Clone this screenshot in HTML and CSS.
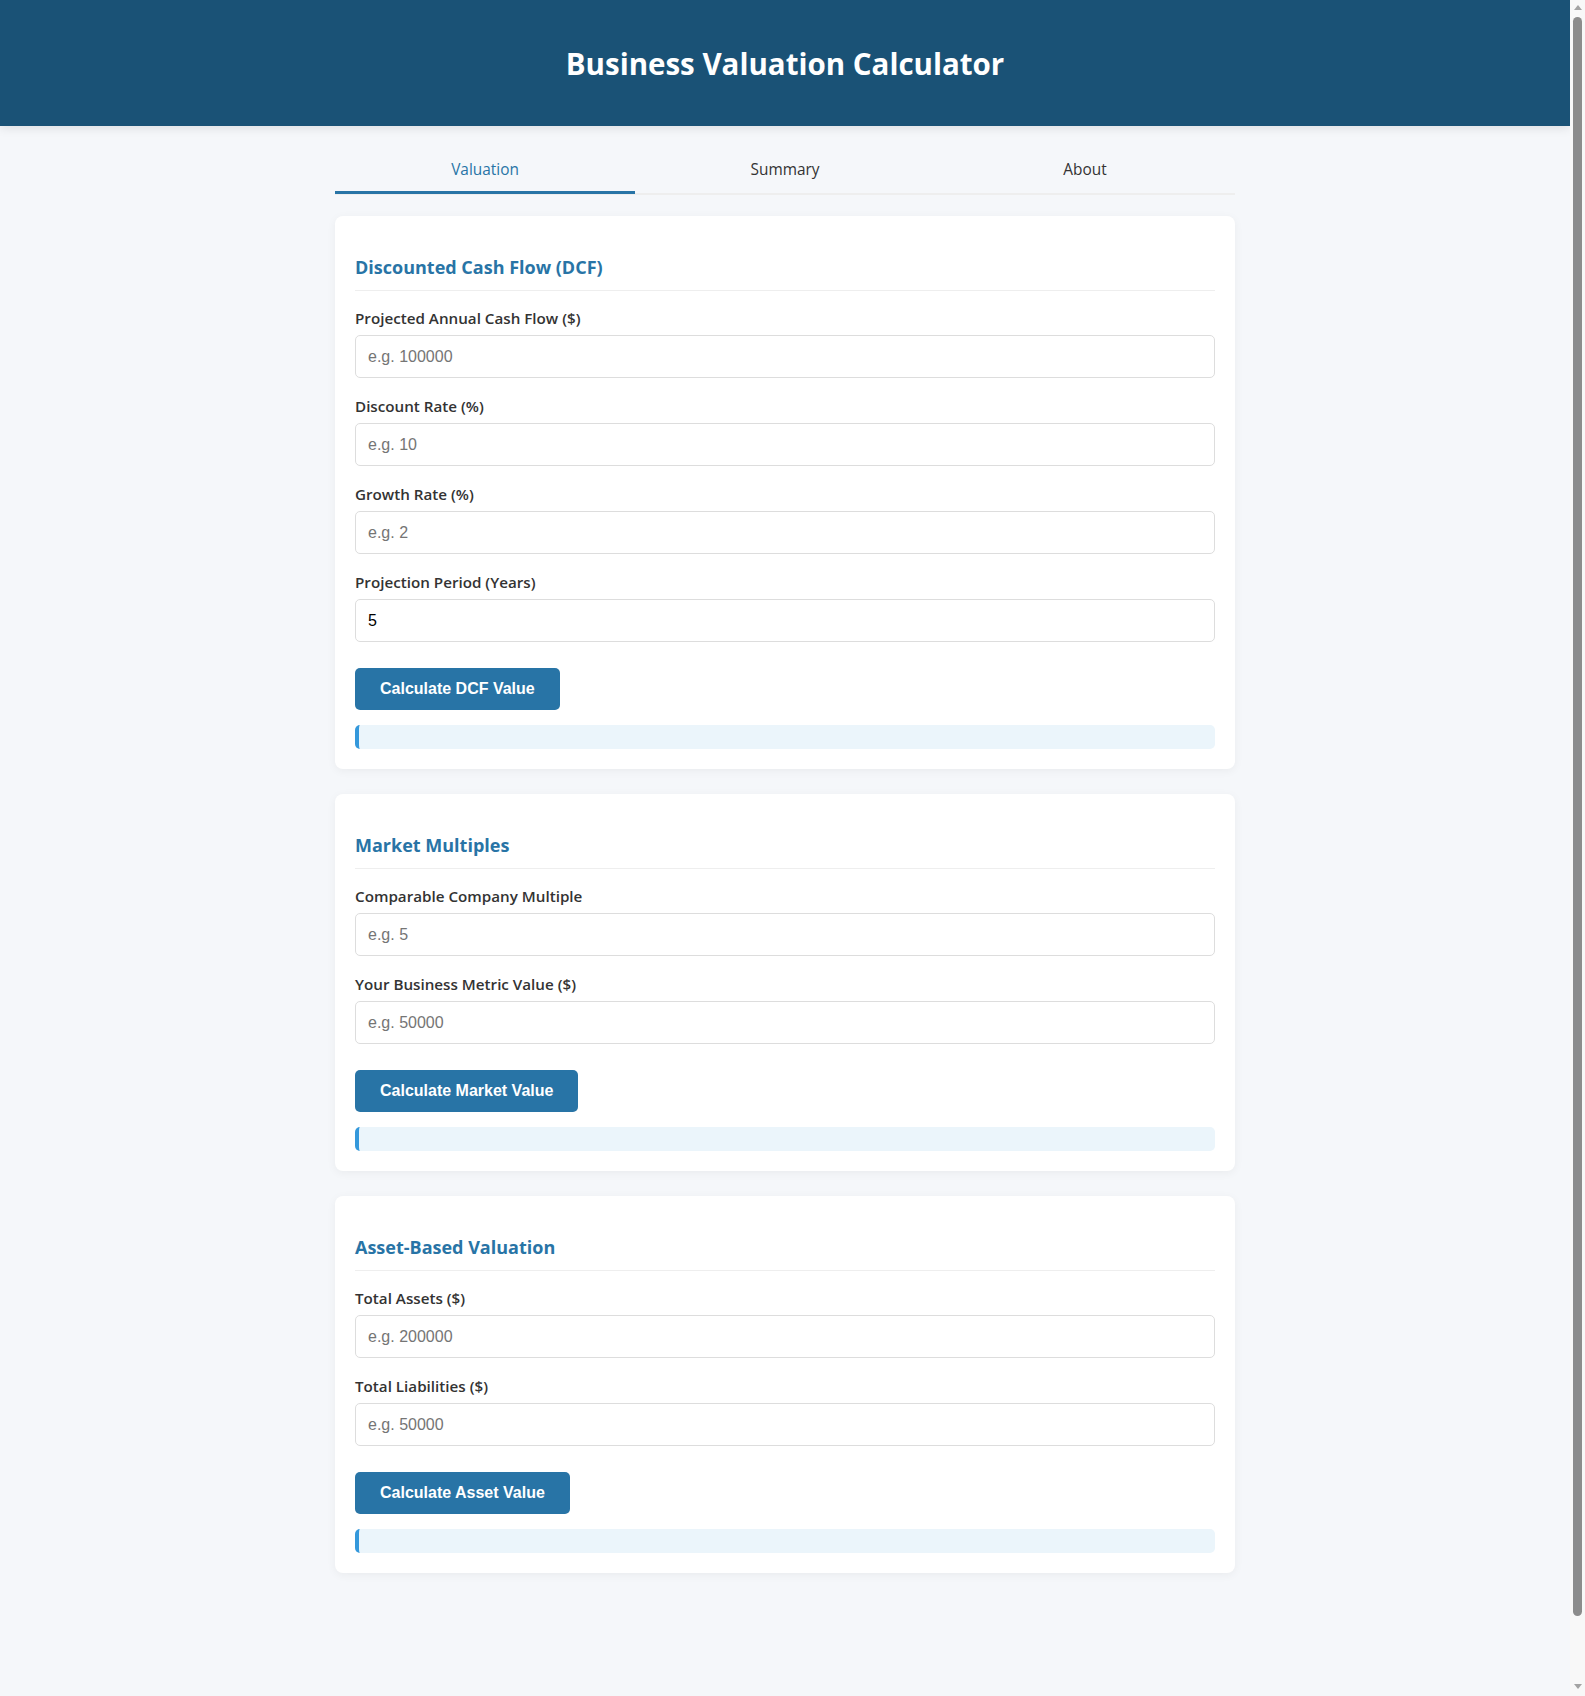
FILE: index.html
```html
<!DOCTYPE html>
<html lang="en">
<head>
<meta charset="UTF-8">
<title>Business Valuation Calculator</title>
<link rel="stylesheet" href="styles.css">
</head>
<body>
<header class="site-header">
  <h1 class="site-title">Business Valuation Calculator</h1>
</header>
<main class="container">
  <nav class="tabs">
    <button class="tab tab-active">Valuation</button>
    <button class="tab">Summary</button>
    <button class="tab">About</button>
  </nav>

  <section class="card">
    <h2 class="card-title">Discounted Cash Flow (DCF)</h2>
    <div class="form-group">
      <label class="field-label">Projected Annual Cash Flow ($)</label>
      <input class="field-input" type="number" placeholder="e.g. 100000">
    </div>
    <div class="form-group">
      <label class="field-label">Discount Rate (%)</label>
      <input class="field-input" type="number" placeholder="e.g. 10">
    </div>
    <div class="form-group">
      <label class="field-label">Growth Rate (%)</label>
      <input class="field-input" type="number" placeholder="e.g. 2">
    </div>
    <div class="form-group">
      <label class="field-label">Projection Period (Years)</label>
      <input class="field-input" type="number" value="5">
    </div>
    <button class="calc-btn">Calculate DCF Value</button>
    <div class="result"></div>
  </section>

  <section class="card">
    <h2 class="card-title">Market Multiples</h2>
    <div class="form-group">
      <label class="field-label">Comparable Company Multiple</label>
      <input class="field-input" type="number" placeholder="e.g. 5">
    </div>
    <div class="form-group">
      <label class="field-label">Your Business Metric Value ($)</label>
      <input class="field-input" type="number" placeholder="e.g. 50000">
    </div>
    <button class="calc-btn">Calculate Market Value</button>
    <div class="result"></div>
  </section>

  <section class="card">
    <h2 class="card-title">Asset-Based Valuation</h2>
    <div class="form-group">
      <label class="field-label">Total Assets ($)</label>
      <input class="field-input" type="number" placeholder="e.g. 200000">
    </div>
    <div class="form-group">
      <label class="field-label">Total Liabilities ($)</label>
      <input class="field-input" type="number" placeholder="e.g. 50000">
    </div>
    <button class="calc-btn">Calculate Asset Value</button>
    <div class="result"></div>
  </section>
</main>
<div class="scrollbar" aria-hidden="true">
  <div class="scroll-arrow scroll-arrow-up"></div>
  <div class="scroll-thumb"></div>
  <div class="scroll-spacer"></div>
  <div class="scroll-arrow scroll-arrow-down"></div>
</div>
</body>
</html>
```
FILE: styles.css
```css
body {
  margin: 0;
  padding-right: 15px;
  background: #f5f7fa;
  color: #333;
  font-family: "Segoe UI", "Open Sans", sans-serif;
}

.site-header {
  background: #1a5276;
  color: #fff;
  text-align: center;
  padding: 20px;
  box-shadow: 0 2px 10px rgba(0, 0, 0, 0.1);
}

.site-title {
  margin: 21.5px 0;
  font-size: 29.5px;
  line-height: 43px;
  font-weight: 700;
}

.container {
  max-width: 900px;
  margin: 20px auto;
}

.tabs {
  display: flex;
  border-bottom: 2px solid #eee;
  margin-bottom: 21px;
}

.tab {
  flex: 1;
  background: none;
  border: none;
  border-bottom: 3px solid transparent;
  margin-bottom: -1px;
  padding: 13px 15px 11px;
  font-family: "Segoe UI", "Open Sans", sans-serif;
  font-size: 15.4px;
  line-height: 21px;
  font-weight: 500;
  color: #333;
  cursor: pointer;
}

.tab-active {
  color: #2874a6;
  border-bottom-color: #2874a6;
}

.card {
  background: #fff;
  border-radius: 8px;
  padding: 20px;
  margin-bottom: 25px;
  box-shadow: 0 2px 10px rgba(0, 0, 0, 0.05);
}

.card-title {
  margin: 17px 0;
  padding-bottom: 9px;
  border-bottom: 1px solid #eee;
  color: #2874a6;
  font-size: 18px;
  line-height: 28px;
  font-weight: 700;
}

.form-group {
  margin-bottom: 18px;
}

.field-label {
  display: block;
  margin-bottom: 6px;
  padding-bottom: 1px;
  font-size: 15.2px;
  line-height: 20px;
  font-weight: 600;
}

.field-input {
  display: block;
  width: 100%;
  box-sizing: border-box;
  padding: 12px;
  border: 1px solid #ddd;
  border-radius: 5px;
  background: #fff;
  font-family: "Liberation Sans", Arial, sans-serif;
  font-size: 16px;
  line-height: 17px;
  color: #000;
}

.field-input::placeholder {
  color: #757575;
}

.calc-btn {
  display: block;
  margin-top: 26px;
  padding: 12px 25px;
  border: none;
  border-radius: 5px;
  background: #2874a6;
  color: #fff;
  font-family: "Liberation Sans", Arial, sans-serif;
  font-size: 16px;
  font-weight: 700;
  line-height: 18px;
  cursor: pointer;
}

.result {
  margin-top: 15px;
  padding: 12px;
  border-left: 4px solid #3498db;
  border-radius: 5px;
  background: #ebf5fb;
}

/* window scrollbar as seen in the capture */
.scrollbar {
  position: fixed;
  top: 0;
  right: 0;
  width: 15px;
  height: 100vh;
  background: #f8f8f8;
  display: flex;
  flex-direction: column;
  align-items: center;
}

.scroll-arrow {
  width: 0;
  height: 0;
  border-left: 4px solid transparent;
  border-right: 4px solid transparent;
}

.scroll-arrow-up {
  margin-top: 5px;
  border-bottom: 5px solid #a3a3a3;
}

.scroll-arrow-down {
  margin-bottom: 7px;
  border-top: 5px solid #a3a3a3;
}

.scroll-thumb {
  width: 9px;
  margin-top: 7px;
  height: 1599px;
  border-radius: 5px;
  background: #8c8c8c;
}

.scroll-spacer {
  flex: 1;
}
```
